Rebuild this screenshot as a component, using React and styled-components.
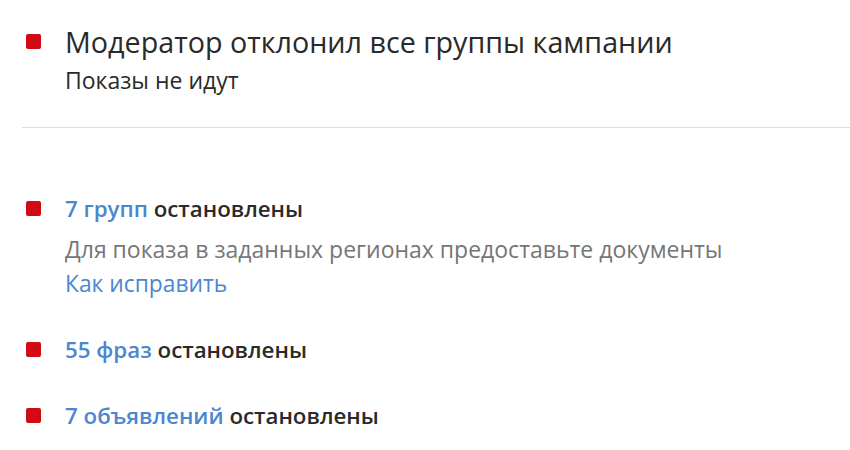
import React from 'react';
import styled, {createGlobalStyle} from 'styled-components';

const GlobalStyle = createGlobalStyle`
    html, body {
        margin: 0;
        padding: 0;
        background: #fff;
    }
    body {
        font-family: "Open Sans", "Noto Sans", sans-serif;
        color: #222;
    }
`;

const groups = [
    {count: '7 групп', note: 'Для показа в заданных регионах предоставьте документы', fix: 'Как исправить'},
    {count: '55 фраз'},
    {count: '7 объявлений'},
];

const App = () => {
    return(
        <Page>
            <GlobalStyle/>
            <Header>
                <Marker big/>
                <div>
                    <Title>Модератор отклонил все группы кампании</Title>
                    <Subtitle>Показы не идут</Subtitle>
                </div>
            </Header>
            <Divider/>
            <List>
                {groups.map(g => (
                    <Item key={g.count}>
                        <Marker/>
                        <div>
                            <ItemTitle><Count>{g.count}</Count> остановлены</ItemTitle>
                            {g.note && <Note>{g.note}</Note>}
                            {g.fix && <Fix href="#">{g.fix}</Fix>}
                        </div>
                    </Item>
                ))}
            </List>
        </Page>
    )
};

export default App;

const Page = styled.div`
    width: 850px;
    height: 450px;
    overflow: hidden;
    padding-top: 24px;
    box-sizing: border-box;
`;

const Header = styled.div`
    display: grid;
    grid-template-columns: 39px 1fr;
    padding-left: 26px;
`;

const Marker = styled.span`
    display: block;
    width: 15px;
    height: 15px;
    border-radius: 2px;
    background: #d10a13;
    margin-top: ${p => p.big ? '10px' : '7px'};
`;

const Title = styled.div`
    font-size: 28.7px;
    line-height: 36px;
    color: #2a2a2a;
`;

const Subtitle = styled.div`
    font-size: 23px;
    line-height: 30px;
    margin-top: 5px;
    color: #2a2a2a;
`;

const Divider = styled.div`
    height: 1px;
    background: #dcdcdc;
    margin: 32px 0 0 22px;
`;

const List = styled.div`
    display: flex;
    flex-direction: column;
    gap: 36px;
    padding: 66px 0 0 26px;
`;

const Item = styled.div`
    display: grid;
    grid-template-columns: 39px 1fr;
`;

const ItemTitle = styled.div`
    font-size: 22.3px;
    line-height: 30px;
    font-weight: 600;
    color: #2a2a2a;
`;

const Count = styled.span`
    color: #4a87cf;
`;

const Note = styled.div`
    font-size: 23px;
    line-height: 30px;
    margin-top: 10px;
    color: #767676;
`;

const Fix = styled.a`
    display: block;
    font-size: 22.8px;
    line-height: 30px;
    margin-top: 5px;
    color: #4a87cf;
    text-decoration: none;
`;
